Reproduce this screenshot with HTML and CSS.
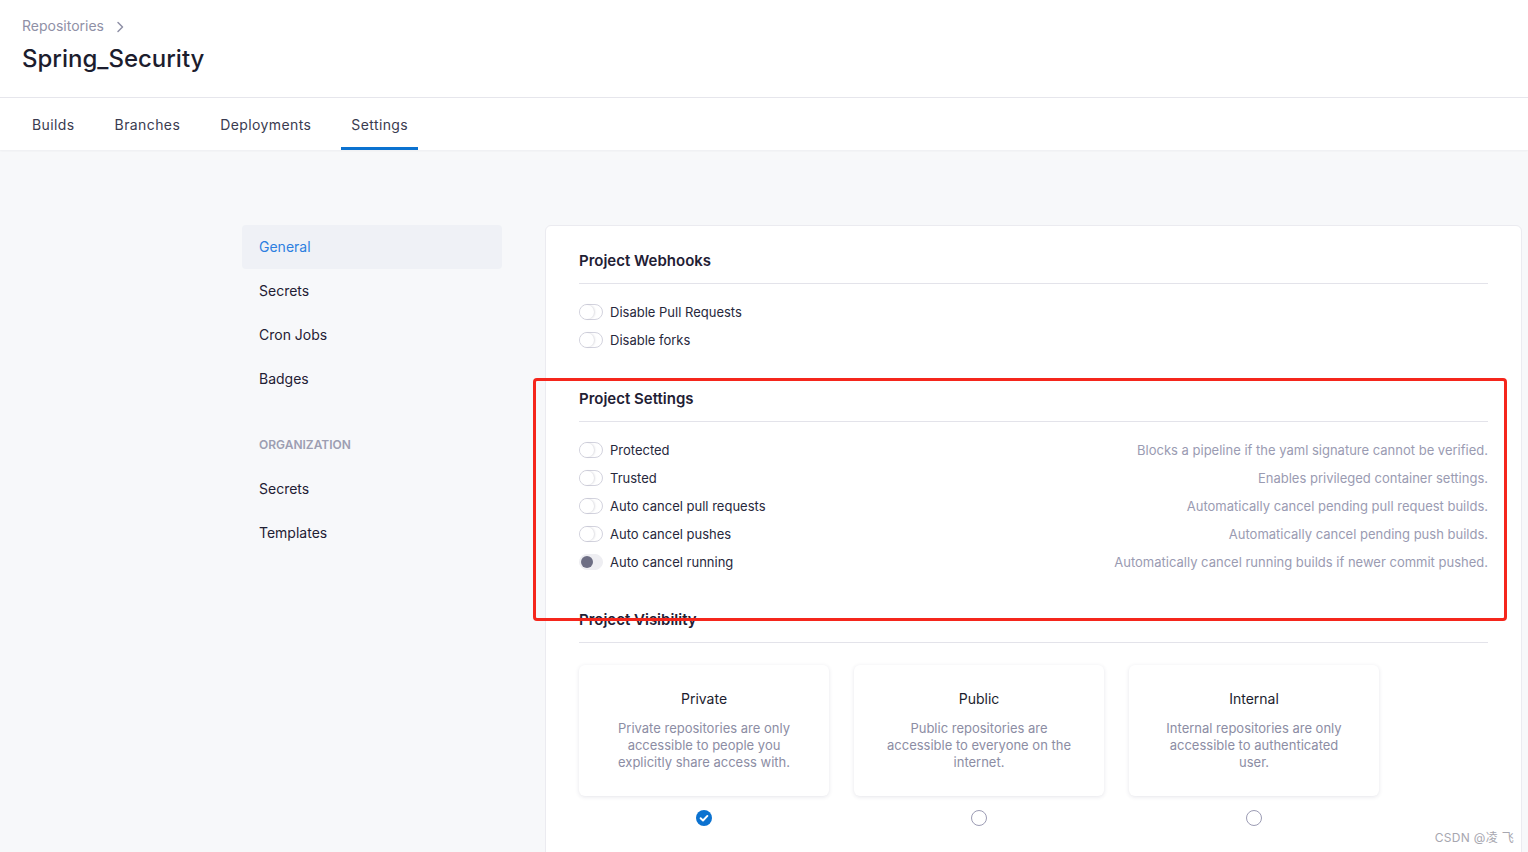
FILE: index.html
```html
<!DOCTYPE html>
<html>
<head>
<meta charset="utf-8">
<link rel="stylesheet" href="styles.css">
</head>
<body>
<header class="header">
  <div class="crumbs">Repositories <span class="chev"><svg width="8" height="12" viewBox="0 0 8 12"><path d="M2 1.5 L6.5 6 L2 10.5" fill="none" stroke="#8f90a6" stroke-width="1.5" stroke-linecap="round" stroke-linejoin="round"/></svg></span></div>
  <h1 class="title">Spring_Security</h1>
</header>
<nav class="tabs">
  <a class="tab">Builds</a>
  <a class="tab">Branches</a>
  <a class="tab">Deployments</a>
  <a class="tab active">Settings</a>
</nav>
<main class="main">
  <aside class="side">
    <div class="side-item active">General</div>
    <div class="side-item">Secrets</div>
    <div class="side-item">Cron Jobs</div>
    <div class="side-item">Badges</div>
    <div class="side-label">ORGANIZATION</div>
    <div class="side-item">Secrets</div>
    <div class="side-item">Templates</div>
  </aside>
  <section class="panel">
    <div class="section">
      <h2 class="sec-title">Project Webhooks</h2>
      <div class="row"><span class="toggle"><i></i></span><span class="label">Disable Pull Requests</span></div>
      <div class="row"><span class="toggle"><i></i></span><span class="label">Disable forks</span></div>
    </div>
    <div class="section">
      <h2 class="sec-title">Project Settings</h2>
      <div class="row"><span class="toggle"><i></i></span><span class="label">Protected</span><span class="desc">Blocks a pipeline if the yaml signature cannot be verified.</span></div>
      <div class="row"><span class="toggle"><i></i></span><span class="label">Trusted</span><span class="desc">Enables privileged container settings.</span></div>
      <div class="row"><span class="toggle"><i></i></span><span class="label">Auto cancel pull requests</span><span class="desc">Automatically cancel pending pull request builds.</span></div>
      <div class="row"><span class="toggle"><i></i></span><span class="label">Auto cancel pushes</span><span class="desc">Automatically cancel pending push builds.</span></div>
      <div class="row"><span class="toggle dark"><i></i></span><span class="label">Auto cancel running</span><span class="desc">Automatically cancel running builds if newer commit pushed.</span></div>
    </div>
    <div class="section">
      <h2 class="sec-title">Project Visibility</h2>
      <div class="vis">
        <div class="vis-item">
          <div class="vis-card"><div class="vis-name">Private</div><div class="vis-desc">Private repositories are only accessible to people you explicitly share access with.</div></div>
          <span class="radio checked"><svg width="16" height="16" viewBox="0 0 16 16"><circle cx="8" cy="8" r="8" fill="#0b72d0"/><path d="M4.6 8.2 L7 10.5 L11.4 5.9" fill="none" stroke="#fff" stroke-width="1.9" stroke-linecap="round" stroke-linejoin="round"/></svg></span>
        </div>
        <div class="vis-item">
          <div class="vis-card"><div class="vis-name">Public</div><div class="vis-desc">Public repositories are accessible to everyone on the internet.</div></div>
          <span class="radio"></span>
        </div>
        <div class="vis-item">
          <div class="vis-card"><div class="vis-name">Internal</div><div class="vis-desc">Internal repositories are only accessible to authenticated user.</div></div>
          <span class="radio"></span>
        </div>
      </div>
    </div>
  </section>
</main>
<div class="highlight"></div>
<div class="watermark">CSDN @凌 飞</div>
</body>
</html>
```
FILE: styles.css
```css
* { box-sizing: border-box; }
html, body { margin: 0; padding: 0; }
body {
  font-family: Inter, "Noto Sans", "Noto Sans CJK SC", sans-serif;
  background: #f7f8fa;
  color: #1f2034;
  height: 852px;
  overflow: hidden;
  position: relative;
}
.header {
  background: #fff;
  height: 98px;
  padding: 16px 22px 0;
  border-bottom: 1px solid #e6e6ec;
}
.crumbs {
  font-size: 14px;
  line-height: 20px;
  color: #8f90a6;
  display: flex;
  align-items: center;
  gap: 12px;
}
.chev { display: inline-flex; margin-top: 1px; }
.title {
  margin: 5px 0 0;
  font-size: 24px;
  line-height: 36px;
  font-weight: 500;
  color: #1c1d2e;
}
.tabs {
  background: #fff;
  height: 52px;
  display: flex;
  gap: 20px;
  padding: 0 22px;
  box-shadow: 0 1px 2px rgba(30, 30, 60, 0.05);
  position: relative;
}
.tab {
  display: flex;
  align-items: center;
  padding: 4px 10px 0;
  font-size: 14px;
  letter-spacing: 0.4px;
  color: #3a3b50;
  border-bottom: 3px solid transparent;
}
.tab.active { border-bottom-color: #0b72d0; }
.main {
  display: flex;
  align-items: flex-start;
  padding: 75px 6px 0 242px;
  gap: 43px;
}
.side { width: 260px; flex: none; }
.side-item {
  height: 44px;
  display: flex;
  align-items: center;
  padding-left: 17px;
  padding-bottom: 1px;
  font-size: 14px;
  color: #1f2034;
  border-radius: 4px;
}
.side-item.active { background: #eff1f6; color: #2d7fe0; }
.side-label {
  margin-top: 22px;
  height: 44px;
  display: flex;
  align-items: center;
  padding-left: 17px;
  padding-bottom: 1px;
  font-size: 12px;
  font-weight: 600;
  color: #9d9eb2;
}
.panel {
  flex: 1;
  background: #fff;
  border: 1px solid #ebebf0;
  border-radius: 6px;
  padding: 25px 33px 0 33px;
  height: 700px;
}
.section { margin-bottom: 34px; }
.section:first-child { margin-bottom: 35px; }
.sec-title {
  margin: 0 0 14px;
  font-size: 15px;
  line-height: 20px;
  font-weight: 600;
  color: #1f2034;
  padding-bottom: 12px;
  border-bottom: 1px solid #e3e3ea;
}
.row {
  height: 28px;
  display: flex;
  align-items: center;
  font-size: 13px;
}
.toggle {
  width: 24px;
  height: 16px;
  border-radius: 8px;
  border: 1px solid #d3d3de;
  background: #fff;
  position: relative;
  flex: none;
  margin-right: 7px;
}
.toggle i {
  position: absolute;
  left: 0;
  top: 0;
  width: 14px;
  height: 14px;
  border-radius: 50%;
  background: #fff;
  box-shadow: 1px 0 2px rgba(60, 60, 90, 0.18);
}
.toggle.dark { background: #eeeef2; border-color: #eeeef2; }
.toggle.dark i { background: #6d6e84; box-shadow: none; left: 1px; top: 1px; width: 12px; height: 12px; }
.label { color: #27283c; }
.desc { margin-left: auto; color: #9a9bb2; }
.vis { display: flex; gap: 25px; margin-top: 22px; }
.vis-item { width: 250px; display: flex; flex-direction: column; align-items: center; }
.vis-card {
  width: 250px;
  height: 131px;
  background: #fff;
  border-radius: 6px;
  box-shadow: 0 1px 4px rgba(40, 40, 80, 0.12);
  padding: 24px 25px 0;
  text-align: center;
}
.vis-name { font-size: 14px; line-height: 20px; color: #1c1d2e; }
.vis-desc { margin-top: 11px; font-size: 13px; line-height: 17px; color: #8c8da4; }
.radio {
  margin-top: 14px;
  width: 16px;
  height: 16px;
  border-radius: 50%;
  border: 1.5px solid #9c9cb4;
  display: block;
}
.radio.checked { border: none; }
.radio svg { display: block; }
.highlight {
  position: absolute;
  left: 533px;
  top: 378px;
  width: 974px;
  height: 243px;
  border: 3px solid #f5261c;
  border-radius: 4px;
  pointer-events: none;
}
.watermark {
  position: absolute;
  right: 14px;
  bottom: 7px;
  font-size: 12px;
  color: #a7a7b0;
  letter-spacing: 0.3px;
}
```
